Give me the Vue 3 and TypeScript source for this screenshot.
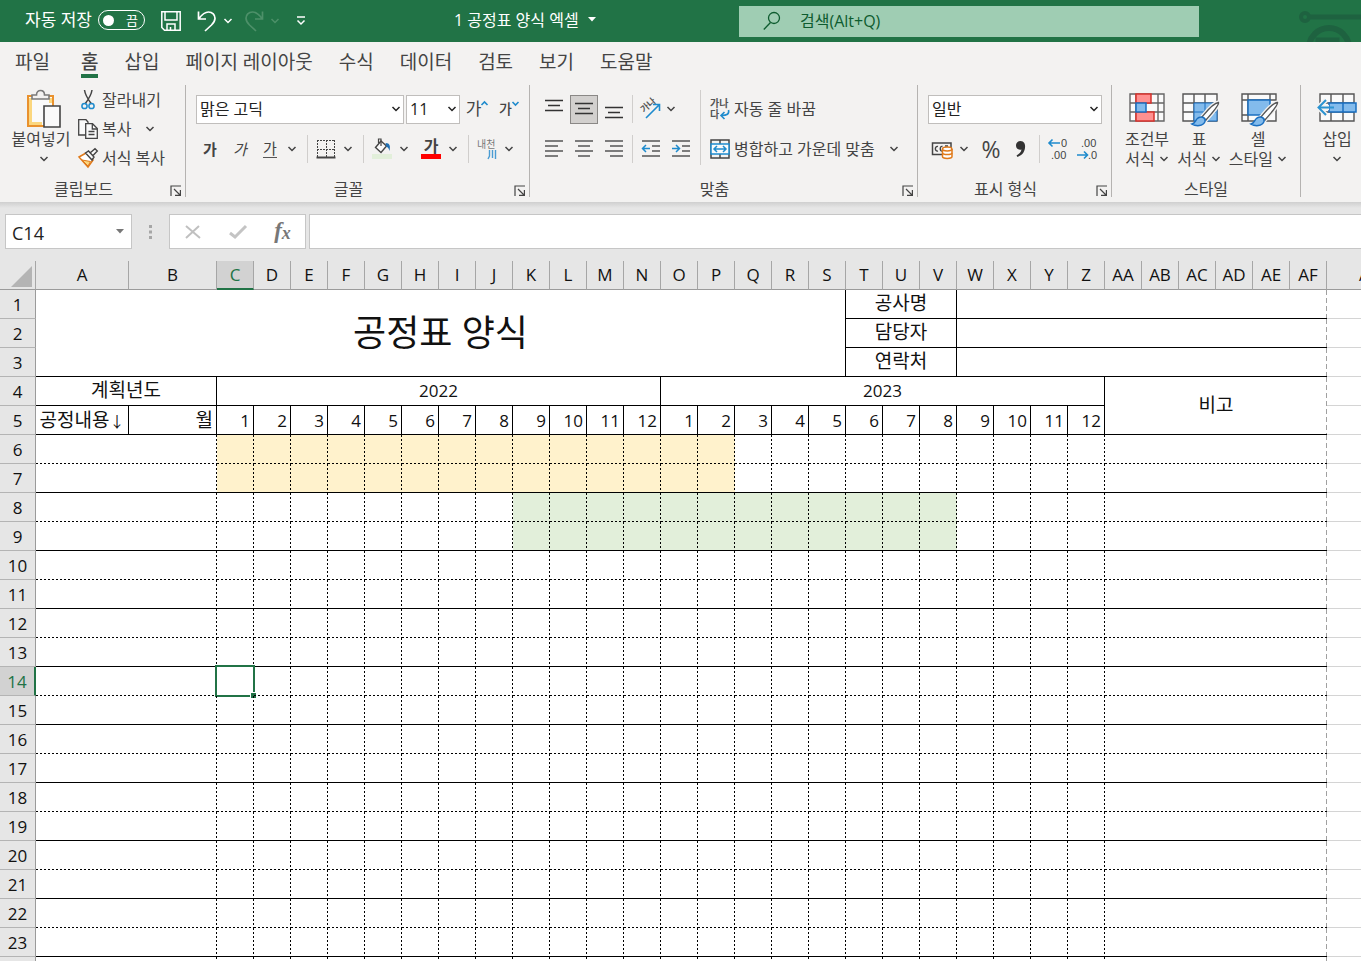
<script setup lang="ts">
import { h, ref } from 'vue'

const Chevron = () =>
  h('svg', { width: 10, height: 8, viewBox: '0 0 10 8', fill: 'none', stroke: 'currentColor', 'stroke-width': 1.5, 'aria-hidden': 'true' }, [
    h('path', { d: 'M1.5 2 5 5.5 8.5 2' }),
  ])

const Launcher = () =>
  h('svg', { width: 12, height: 12, viewBox: '0 0 12 12', fill: 'none', stroke: 'currentColor', 'stroke-width': 1.2, 'aria-hidden': 'true' }, [
    h('path', { d: 'M1 11V1H11M4 4l6 6M10.4 5V10.4H5' }),
  ])

const tabs = ['파일', '홈', '삽입', '페이지 레이아웃', '수식', '데이터', '검토', '보기', '도움말']
const activeTab = ref('홈')
const autoSave = ref(false)

const letters = 'ABCDEFGHIJKLMNOPQRSTUVWXYZ'.split('')
const columns = [...letters, ...['A', 'B', 'C', 'D', 'E', 'F', 'G'].map((l) => 'A' + l)]
const monthColumns = letters.slice(2)
const months = monthColumns.map((_, i) => (i % 12) + 1)
const bodyRows = Array.from({ length: 19 }, (_, i) => i + 6)

const selected = ref({ column: 'C', row: 14 })

interface Span { rows: number[]; from: number; to: number; tone: string }
const schedule: Span[] = [
  { rows: [6, 7], from: 0, to: 13, tone: 'cream' },
  { rows: [8, 9], from: 8, to: 19, tone: 'mint' },
]

function toneOf(row: number, index: number): string {
  return schedule.find((s) => s.rows.includes(row) && index >= s.from && index <= s.to)?.tone ?? ''
}
function isSelected(column: string, row: number): boolean {
  return selected.value.column === column && selected.value.row === row
}
function select(column: string, row: number) {
  selected.value = { column, row }
}
</script>

<template>
  <div class="app">
    <header class="titlebar">
      <span id="autosave" class="autosave">자동 저장</span>
      <button class="toggle" role="switch" :aria-checked="autoSave" aria-labelledby="autosave" @click="autoSave = !autoSave">
        <i class="knob"></i>{{ autoSave ? '켬' : '끔' }}
      </button>
      <button class="quick save" aria-label="저장">
        <svg width="20" height="20" viewBox="0 0 20 20" fill="none" stroke="currentColor" stroke-width="1.5">
          <path d="M.8.8H19.2V19.2H3.5L.8 16.5ZM4 1v8h12V1M6 19v-6h8v6M9.5 19v-3" />
        </svg>
      </button>
      <button class="quick undo" aria-label="실행 취소">
        <svg width="20" height="22" viewBox="0 0 20 22" fill="none" stroke="currentColor" stroke-width="1.7">
          <path d="M1.5 1.5V9H9M1.8 8.7C5 4.5 8 2 11.5 2C15.5 2 18 5 18 8.2C18 11 16.500 13 14.500 15L8 21" />
        </svg>
      </button>
      <button class="drop" aria-label="실행 취소 목록"><Chevron /></button>
      <button class="quick redo" aria-label="다시 실행" disabled>
        <svg width="20" height="22" viewBox="0 0 20 22" fill="none" stroke="currentColor" stroke-width="1.7">
          <path d="M18.500 1.500V9H11M18.200 8.700C15 4.500 12 2 8.500 2C4.500 2 2 5 2 8.200C2 11 3.500 13 5.500 15L12 21" />
        </svg>
      </button>
      <button class="drop redo" aria-label="다시 실행 목록" disabled><Chevron /></button>
      <button class="quick" aria-label="빠른 실행 도구 모음 사용자 지정">
        <svg width="10" height="10" viewBox="0 0 10 10" fill="none" stroke="currentColor" stroke-width="1.500"><path d="M1 1H9M1.500 4.500 5 8 8.500 4.500" /></svg>
      </button>
      <button class="docname">
        1 공정표 양식 엑셀
        <svg width="8" height="5" viewBox="0 0 8 5"><path d="M0 0H8L4 4.500Z" fill="currentColor" /></svg>
      </button>
      <label class="search">
        <svg width="18" height="20" viewBox="0 0 18 20" fill="none" stroke="currentColor" stroke-width="1.300"><circle cx="11" cy="7" r="5.500" /><path d="M7.500 11.500.8 18.500" /></svg>
        <input type="search" aria-label="검색" placeholder="검색(Alt+Q)" />
      </label>
      <svg class="circuit" width="62" height="42" viewBox="0 0 62 42" fill="none" stroke="#1e6240" aria-hidden="true">
        <circle cx="6" cy="17" r="4" stroke-width="4" /><path d="M11 17H62" stroke-width="5" />
        <circle cx="30" cy="48" r="20" stroke-width="6" /><path d="M18 39H39V42H18Z" fill="#1e6240" stroke-width="3" />
      </svg>
    </header>

    <nav class="tabs">
      <button v-for="t in tabs" :key="t" :class="['tab', { active: t === activeTab }]" @click="activeTab = t">{{ t }}</button>
    </nav>

    <div class="ribbon">
      <section class="group clipboard">
        <div class="body">
          <button class="big paste">
            <svg width="36" height="42" viewBox="0 0 36 42" fill="none">
              <path d="M2 7H27V37H2Z" fill="#fafafa" stroke="#e9912d" stroke-width="2" /><path d="M4.500 9V34.500H16M24.500 9V14" stroke="#fbd77f" stroke-width="3" />
              <path d="M6 10V6H10.500C10.500 0 18.500 0 18.500 6H23V10Z" fill="#f3f2f1" stroke="#7a7a7a" stroke-width="1.600" />
              <path d="M18 17H34V38H18Z" fill="#fafafa" stroke="#444" stroke-width="1.600" />
            </svg>
            <span>붙여넣기</span><Chevron />
          </button>
          <div class="stack">
            <button class="line">
              <svg width="20" height="20" viewBox="0 0 20 20" fill="none" stroke-width="1.500"><path d="M6.500 0C7 4 9 8 13.500 14M14 0C13.500 4 11.500 8 7 14" stroke="#444" /><circle cx="6.500" cy="16" r="2.600" stroke="#1e8bcd" /><circle cx="13.500" cy="16" r="2.600" stroke="#1e8bcd" /></svg>
              잘라내기
            </button>
            <button class="line">
              <svg width="20" height="20" viewBox="0 0 20 20" fill="#fafafa" stroke="#444" stroke-width="1.300"><path d="M.7.700H8L10 3V16H.7Z" /><path d="M7.700 4.700H14.500L19.300 9.500V19.300H7.700Z" /><path d="M14.300 5V10H19M10.500 12.500H16.500M10.500 15.500H16.500" fill="none" /></svg>
              복사 <Chevron class="after" />
            </button>
            <button class="line">
              <svg width="20" height="20" viewBox="0 0 20 20"><path d="M1 9 8 5 15 12 10 19Z" fill="#fff" stroke="#e07a1a" stroke-width="1.500" /><path d="M4 12 12.500 13.500 10 18Z" fill="#fbd77f" stroke="#e07a1a" /><path d="M7.500 5 10.500 3 16 9 14 12Z M12 5 17 .8 19.300 3 15 7.500" fill="#fafafa" stroke="#444" stroke-width="1.400" /></svg>
              서식 복사
            </button>
          </div>
        </div>
        <footer><span>클립보드</span><button aria-label="클립보드 옵션"><Launcher /></button></footer>
      </section>

      <section class="group font">
        <div class="body rows">
          <div class="row">
            <label class="combo family"><select aria-label="글꼴"><option>맑은 고딕</option></select><Chevron /></label>
            <label class="combo size"><select aria-label="글꼴 크기"><option>11</option></select><Chevron /></label>
            <button class="tool grow" aria-label="글꼴 크기 크게"><span>가</span><svg width="7" height="5" viewBox="0 0 7 5" fill="none" stroke="#1e8bcd" stroke-width="1.600"><path d="M.5 4 3.500 1 6.500 4" /></svg></button>
            <button class="tool shrink" aria-label="글꼴 크기 작게"><span>가</span><svg width="7" height="5" viewBox="0 0 7 5" fill="none" stroke="#1e8bcd" stroke-width="1.600"><path d="M.5 1 3.500 4 6.500 1" /></svg></button>
          </div>
          <div class="row">
            <button class="tool bold" aria-label="굵게">가</button>
            <button class="tool italic" aria-label="기울임꼴">가</button>
            <button class="tool under" aria-label="밑줄"><span>가</span></button>
            <button class="drop" aria-label="밑줄 종류"><Chevron /></button>
            <i class="sep"></i>
            <button class="tool" aria-label="테두리">
              <svg width="20" height="20" viewBox="0 0 20 20" fill="none" stroke="#444"><path d="M1 1.500H19M1 10.500H19M1.500 1V18M10.500 1V18M18.500 1V18" stroke-dasharray="2 1" /><path d="M.5 18.500H19.500" stroke-width="2" /></svg>
            </button>
            <button class="drop" aria-label="테두리 종류"><Chevron /></button>
            <i class="sep"></i>
            <button class="tool" aria-label="채우기 색">
              <svg width="20" height="20" viewBox="0 0 20 20" fill="none"><path d="M0 15H20V20H0Z" fill="#e2efda" /><path d="M9 2 3.500 8.500 9 13.500 14.500 7Z" fill="#fafafa" stroke="#444" stroke-width="1.400" /><path d="M9 7V0H6.500V4" stroke="#444" stroke-width="1.200" /><path d="M13.500 4C18 4 18.500 7 17.500 12C16.500 9 16 8 14.500 8Z" fill="#1e6fb3" /></svg>
            </button>
            <button class="drop" aria-label="채우기 색 선택"><Chevron /></button>
            <button class="tool color" aria-label="글꼴 색"><span>가</span></button>
            <button class="drop" aria-label="글꼴 색 선택"><Chevron /></button>
            <i class="sep"></i>
            <button class="tool" aria-label="윗주 필드 표시">
              <svg width="22" height="22" viewBox="0 0 22 22"><text x="1" y="10" font-size="10" fill="#777">내천</text><path d="M13.500 12V18L12 21M16.500 12V20M19.500 12V21" stroke="#4a9cd3" stroke-width="1.400" fill="none" /></svg>
            </button>
            <button class="drop" aria-label="윗주 옵션"><Chevron /></button>
          </div>
        </div>
        <footer><span>글꼴</span><button aria-label="글꼴 옵션"><Launcher /></button></footer>
      </section>

      <section class="group align">
        <div class="body">
          <div class="rows">
            <div class="row">
              <button class="tool" aria-label="위쪽 맞춤"><svg width="20" height="20" viewBox="0 0 20 20" stroke="#333" stroke-width="1.300"><path d="M1 1.500H19M4 6.500H16M1 11.500H19" /></svg></button>
              <button class="tool on" aria-label="가운데 맞춤" aria-pressed="true"><svg width="20" height="20" viewBox="0 0 20 20" stroke="#333" stroke-width="1.300"><path d="M1 4.500H19M4 9.500H16M1 14.500H19" /></svg></button>
              <button class="tool" aria-label="아래쪽 맞춤"><svg width="20" height="20" viewBox="0 0 20 20" stroke="#333" stroke-width="1.300"><path d="M1 8.500H19M4 13.500H16M1 18.500H19" /></svg></button>
              <i class="sep"></i>
              <button class="tool slim" aria-label="방향"><svg width="22" height="22" viewBox="0 0 22 22" fill="none"><text font-size="9" font-weight="700" fill="#555" transform="translate(5 15) rotate(-42)">가나</text><path d="M7 20 20 7M14 6.500H20.500V13" stroke="#1e8bcd" stroke-width="1.600" /></svg></button>
              <button class="drop" aria-label="방향 선택"><Chevron /></button>
            </div>
            <div class="row">
              <button class="tool" aria-label="왼쪽 맞춤"><svg width="20" height="20" viewBox="0 0 20 20" stroke="#555" stroke-width="1.500"><path d="M1 2H19M1 7H14M1 12H19M1 17H14" /></svg></button>
              <button class="tool" aria-label="가로 가운데 맞춤"><svg width="20" height="20" viewBox="0 0 20 20" stroke="#555" stroke-width="1.500"><path d="M1 2H19M4 7H16M1 12H19M4 17H16" /></svg></button>
              <button class="tool" aria-label="오른쪽 맞춤"><svg width="20" height="20" viewBox="0 0 20 20" stroke="#555" stroke-width="1.500"><path d="M1 2H19M6 7H19M1 12H19M6 17H19" /></svg></button>
              <i class="sep"></i>
              <button class="tool" aria-label="내어쓰기"><svg width="20" height="20" viewBox="0 0 20 20" fill="none" stroke="#555" stroke-width="1.500"><path d="M1 2H19M11 7H19M11 12H19M1 17H19" /><path d="M9 9.500H2M5 6 1.500 9.500 5 13" stroke="#1e8bcd" /></svg></button>
              <button class="tool" aria-label="들여쓰기"><svg width="20" height="20" viewBox="0 0 20 20" fill="none" stroke="#555" stroke-width="1.500"><path d="M1 2H19M11 7H19M11 12H19M1 17H19" /><path d="M1 9.500H8M5 6 8.500 9.500 5 13" stroke="#1e8bcd" /></svg></button>
            </div>
          </div>
          <i class="sep tall"></i>
          <div class="rows">
            <div class="row">
              <button class="line">
                <svg width="20" height="22" viewBox="0 0 20 22" fill="none"><text x="0" y="9" font-size="10" font-weight="700" fill="#555">가나</text><text x="0" y="20" font-size="10" font-weight="700" fill="#555">다</text><path d="M18.500 12C19.500 16 17 17.500 11.500 17.500M14.500 14 11 17.500 14.500 21" stroke="#1e8bcd" stroke-width="1.600" /></svg>
                자동 줄 바꿈
              </button>
            </div>
            <div class="row">
              <button class="line">
                <svg width="20" height="20" viewBox="0 0 20 20" fill="none"><path d="M1 1H19V19H1ZM10 1V5M10 15V19" stroke="#444" stroke-width="1.500" /><path d="M1 5H19V15H1Z" fill="#fafafa" stroke="#1e8bcd" stroke-width="1.500" /><path d="M4 10H16M7 7 4 10 7 13M13 7 16 10 13 13" stroke="#1e8bcd" stroke-width="1.500" /></svg>
                병합하고 가운데 맞춤 <Chevron class="after" />
              </button>
            </div>
          </div>
        </div>
        <footer><span>맞춤</span><button aria-label="맞춤 옵션"><Launcher /></button></footer>
      </section>

      <section class="group number">
        <div class="body rows">
          <div class="row">
            <label class="combo format"><select aria-label="표시 형식"><option>일반</option></select><Chevron /></label>
          </div>
          <div class="row">
            <button class="tool" aria-label="회계 표시 형식">
              <svg width="22" height="20" viewBox="0 0 22 20" fill="none"><path d="M1.500 4H20V15.500H1.500Z" stroke="#444" stroke-width="1.500" /><path d="M7 7.500C3.500 6.500 3.500 13 7 12M11.500 7.500C8.500 6.500 8.500 13 11.500 12M14 7H17" stroke="#444" stroke-width="1.400" /><path d="M11.500 10V17.500C11.500 20 21 20 21 17.500V10" fill="#fff" stroke="#e07a1a" stroke-width="1.500" /><path d="M11.500 14C12 16 20.500 16 21 14" stroke="#e07a1a" stroke-width="1.500" /><ellipse cx="16.200" cy="10" rx="4.700" ry="1.900" fill="#fff" stroke="#e07a1a" stroke-width="1.500" /></svg>
            </button>
            <button class="drop" aria-label="통화 선택"><Chevron /></button>
            <button class="tool percent" aria-label="백분율 스타일">%</button>
            <button class="tool" aria-label="쉼표 스타일"><svg width="12" height="18" viewBox="0 0 12 18"><path d="M5.500 1C9 1 10.500 4 10 8C9.500 12.500 6.500 15.500 2.500 17L1.500 15.500C4 14 6 12.500 6.500 9.500C3 10.500 1 8 1 5.500C1 3 3 1 5.500 1Z" fill="#333" /></svg></button>
            <i class="sep"></i>
            <button class="tool" aria-label="자릿수 늘림"><svg width="22" height="24" viewBox="0 0 22 24" fill="none"><text x="14" y="10" font-size="11" fill="#444">0</text><text x="4" y="22" font-size="11" fill="#444">.00</text><path d="M13 6H2M5.500 2.500 2 6 5.500 9.500" stroke="#1e8bcd" stroke-width="1.600" /></svg></button>
            <button class="tool" aria-label="자릿수 줄임"><svg width="22" height="24" viewBox="0 0 22 24" fill="none"><text x="4" y="10" font-size="11" fill="#444">.00</text><text x="11" y="22" font-size="11" fill="#444">.0</text><path d="M0 18H10M7 14.500 10.500 18 7 21.500" stroke="#1e8bcd" stroke-width="1.600" /></svg></button>
          </div>
        </div>
        <footer><span>표시 형식</span><button aria-label="표시 형식 옵션"><Launcher /></button></footer>
      </section>

      <section class="group styles">
        <div class="body">
          <button class="big">
            <svg width="36" height="34" viewBox="0 0 36 34" fill="none"><path d="M1 1H35V28H1ZM1 10H35M1 19H35M7 1V28M29 1V28" fill="#fafafa" stroke="#666" stroke-width="1.400" /><path d="M7 1H22V10H7ZM7 19H25V28H7Z" fill="#ff9090" stroke="#d8322c" stroke-width="1.500" /><path d="M7 10H17V19H7Z" fill="#83bbec" stroke="#1a6fc0" stroke-width="1.500" /></svg>
            <span>조건부</span><span>서식 <Chevron /></span>
          </button>
          <button class="big brush">
            <svg width="38" height="34" viewBox="0 0 38 34" fill="none"><path d="M1 1H35V28H1ZM1 10H35M1 19H12M12 1V28M23 1V10" fill="#fafafa" stroke="#555" stroke-width="1.400" /><path d="M12 10H35V28H12Z" fill="#83bbec" stroke="#1a6fc0" /><path d="M12 19H34M23 10V28" stroke="#1a6fc0" /><path d="M20 24C25 18 31 10 36 9.500C38 12 30 20 24 27Z" fill="#fff" stroke="#f3f2f1" stroke-width="4" /><path d="M20 24C25 18 31 10 36.500 9.500C37.500 12 30 20 24 27Z" fill="#fff" stroke="#555" stroke-width="1.400" /><path d="M10 31C14 30 13 27 16 25C20 22.500 24 25 23 28.500C21 33.500 14 33.500 10 31Z" fill="#83bbec" stroke="#1a6fc0" stroke-width="1.500" /></svg>
            <span>표</span><span>서식 <Chevron /></span>
          </button>
          <button class="big brush wide">
            <svg width="38" height="34" viewBox="0 0 38 34" fill="none"><path d="M1 1H35V28H1ZM1 7H35M7 1V28M29 1V7M1 22H7" fill="#fafafa" stroke="#555" stroke-width="1.400" /><path d="M7 7H29V22H7Z" fill="#83bbec" stroke="#1a6fc0" stroke-width="1.500" /><path d="M20 24C25 18 31 10 36 9.500C38 12 30 20 24 27Z" fill="#fff" stroke="#f3f2f1" stroke-width="4" /><path d="M20 24C25 18 31 10 36.500 9.500C37.500 12 30 20 24 27Z" fill="#fff" stroke="#555" stroke-width="1.400" /><path d="M10 31C14 30 13 27 16 25C20 22.500 24 25 23 28.500C21 33.500 14 33.500 10 31Z" fill="#83bbec" stroke="#1a6fc0" stroke-width="1.500" /></svg>
            <span>셀</span><span>스타일 <Chevron /></span>
          </button>
        </div>
        <footer><span>스타일</span></footer>
      </section>

      <section class="group cells">
        <div class="body">
          <button class="big">
            <svg width="40" height="34" viewBox="0 0 40 34" fill="none"><path d="M3 1H37V28H3ZM3 10H37M3 19H37M14 1V28M26 1V28" fill="#fafafa" stroke="#555" stroke-width="1.400" /><path d="M12 10H39V19H12Z" fill="#83bbec" stroke="#1a6fc0" stroke-width="1.500" /><path d="M26 10V19" stroke="#1a6fc0" stroke-width="1.500" /><path d="M12 14.500H3M9 7 1.500 14.500 9 22" stroke="#f3f2f1" stroke-width="5" /><path d="M17 14.500H2M9 7 1.500 14.500 9 22" stroke="#2b93d1" stroke-width="2" /></svg>
            <span>삽입</span><Chevron />
          </button>
        </div>
      </section>
    </div>

    <div class="formulabar">
      <div class="namebox">
        <input aria-label="이름 상자" :value="selected.column + selected.row" />
        <svg width="8" height="5" viewBox="0 0 8 5"><path d="M0 0H8L4 4.500Z" fill="#777" /></svg>
      </div>
      <svg class="grip" width="3" height="14" viewBox="0 0 3 14" fill="#a6a6a6"><path d="M0 0H3V3H0ZM0 5.500H3V8.500H0ZM0 11H3V14H0Z" /></svg>
      <div class="actions">
        <button aria-label="취소"><svg width="16" height="14" viewBox="0 0 16 14" fill="none" stroke="#c0c0c0" stroke-width="2"><path d="M1 1 15 13M14 1 1 13" /></svg></button>
        <button aria-label="입력"><svg width="18" height="14" viewBox="0 0 18 14" fill="none" stroke="#c4c4c4" stroke-width="3"><path d="M1 8 6 12 17 1" /></svg></button>
        <button class="fx" aria-label="함수 삽입">f<small>x</small></button>
      </div>
      <input class="formula" aria-label="수식 입력줄" />
    </div>

    <main class="sheet">
      <table>
        <colgroup>
          <col class="c-head" /><col class="c-a" /><col class="c-b" />
          <col v-for="n in 30" :key="n" class="c-month" />
          <col class="c-b" />
        </colgroup>
        <thead>
          <tr>
            <th class="corner"><svg width="21" height="21" viewBox="0 0 21 21" aria-hidden="true"><path d="M21 0V21H0Z" fill="#b4b4b4" /></svg></th>
            <th v-for="c in columns" :key="c" scope="col" :class="{ current: c === selected.column }">{{ c }}</th>
          </tr>
        </thead>
        <tbody>
          <tr>
            <th scope="row">1</th>
            <td colspan="19" rowspan="3" class="solid title">공정표 양식</td>
            <td colspan="3" class="solid label">공사명</td>
            <td colspan="8" class="solid-b"></td><td colspan="2" class="solid-b page"></td><td class="free"></td>
          </tr>
          <tr>
            <th scope="row">2</th>
            <td colspan="3" class="solid label">담당자</td>
            <td colspan="8" class="solid-b"></td><td colspan="2" class="solid-b page"></td><td class="free"></td>
          </tr>
          <tr>
            <th scope="row">3</th>
            <td colspan="3" class="solid label">연락처</td>
            <td colspan="8" class="solid-b"></td><td colspan="2" class="solid-b page"></td><td class="free"></td>
          </tr>
          <tr>
            <th scope="row">4</th>
            <td colspan="2" class="solid label">계획년도</td>
            <td colspan="12" class="solid">2022</td>
            <td colspan="12" class="solid">2023</td>
            <td colspan="6" rowspan="2" class="solid-b page label">비고</td><td class="free"></td>
          </tr>
          <tr>
            <th scope="row">5</th>
            <td class="solid item">공정내용<small>↓</small></td>
            <td class="solid item num">월</td>
            <td v-for="(m, i) in months" :key="i" class="solid num">{{ m }}</td>
            <td class="free"></td>
          </tr>
          <tr v-for="r in bodyRows" :key="r" :class="r % 2 ? 'lower' : 'upper'">
            <th scope="row" :class="{ current: r === selected.row }">{{ r }}</th>
            <td colspan="2" class="mark" @click="select('A', r)"></td>
            <td v-for="(c, i) in monthColumns" :key="c" :class="['mark', toneOf(r, i)]" @click="select(c, r)">
              <div v-if="isSelected(c, r)" class="cursor"></div>
            </td>
            <td colspan="6" class="mark page" @click="select('AA', r)"></td>
            <td class="free"></td>
          </tr>
        </tbody>
      </table>
    </main>
  </div>
</template>

<style>
html, body { margin: 0; background: #fff; }
</style>

<style scoped>
.app {
  height: 100vh;
  display: flex;
  flex-direction: column;
  overflow: hidden;
  font-family: "Open Sans", "Noto Sans CJK KR", sans-serif;
  font-size: 16px;
  line-height: 20px;
  color: #444;
}
button, input, select { font: inherit; color: inherit; margin: 0; padding: 0; border: 0; background: none; }
button { display: flex; align-items: center; justify-content: center; white-space: nowrap; }
svg { flex: none; overflow: visible; }
svg text { font-family: "Liberation Sans", "Noto Sans CJK KR", sans-serif; }

.titlebar { flex: none; height: 42px; display: flex; align-items: center; padding-left: 25px; background: #217346; color: #fff; font-size: 17px; overflow: hidden; }
.autosave { width: 73px; padding-bottom: 3px; white-space: nowrap; }
.toggle { box-sizing: border-box; width: 47px; height: 20px; margin: 0 12px 2px 0; padding: 0 6px 0 4px; justify-content: space-between; border: 1px solid #fff; border-radius: 10px; font-size: 13px; line-height: 16px; }
.knob { width: 11px; height: 11px; border-radius: 50%; background: #fff; }
.quick { width: 28px; height: 28px; }
.undo { margin-left: 8px; }
.redo { color: #4d9069; }
.drop { width: 14px; height: 28px; margin-right: 5px; }
.docname { gap: 9px; margin-left: 139px; padding-bottom: 3px; font-size: 16px; }
.search { box-sizing: border-box; flex: 0 1 460px; height: 31px; display: flex; align-items: center; gap: 19px; margin-left: auto; padding-left: 24px; background: #9fcdb3; color: #0e5c2f; font-size: 16px; }
.search input { flex: 1; min-width: 0; outline: 0; }
.search input::placeholder { color: #0e5c2f; opacity: 1; }
.circuit { margin-left: 100px; }

.tabs { flex: none; height: 40px; display: flex; gap: 26px; padding-left: 15px; background: #f3f2f1; font-size: 19px; }
.tab { box-sizing: border-box; height: 36px; padding-top: 8px; border-bottom: 4px solid transparent; }
.tab:first-child { margin-right: 5px; }
.tab.active { border-bottom-color: #217346; font-weight: 500; }

.ribbon { flex: none; height: 120px; display: flex; box-sizing: border-box; padding-top: 3px; background: #f3f2f1; overflow: hidden; }
.group { flex: none; box-sizing: border-box; height: 112px; display: flex; flex-direction: column; border-right: 1px solid #b5b3b1; }
.clipboard { width: 186px; }
.font { width: 344px; }
.align { width: 388px; }
.number { width: 194px; }
.styles { width: 189px; }
.cells { width: 74px; border-right: 0; }
.body { flex: 1; display: flex; min-height: 0; }
.group footer { flex: none; display: flex; height: 16px; align-items: center; }
.group footer span { flex: 1; text-align: center; line-height: 16px; }
.group footer button { width: 18px; height: 16px; padding-top: 4px; }
.rows { display: flex; flex-direction: column; padding-top: 4px; }
.row { flex: none; display: flex; align-items: center; height: 40px; }
.font .body, .number .body { padding-left: 9px; }
.align .body { padding-left: 9px; }

.tool { width: 30px; height: 29px; }
.tool.slim { width: 28px; }
.tool.on { box-sizing: border-box; width: 28px; margin: 0 1px; background: #d2d0ce; border: 1px solid #8a8886; }
.sep { width: 1px; height: 28px; margin: 0 3px; background: #d0cecc; }
.sep.tall { height: 75px; margin: 5px 9px 0 4px; }
.combo { display: grid; align-items: center; height: 29px; box-sizing: border-box; margin-left: 1px; border: 1px solid #c0bebc; background: #fff; color: #222; }
.combo > * { grid-area: 1 / 1; }
.combo svg { justify-self: end; margin-right: 2px; pointer-events: none; }
.combo select { appearance: none; width: 100%; height: 27px; padding-left: 3px; outline: 0; }
.family { width: 208px; }
.size { width: 54px; margin-left: 2px; }
.format { width: 174px; }
.grow, .shrink { margin-left: 2px; }
.grow { font-size: 17px; }
.shrink { font-size: 14px; font-weight: 500; }
.grow svg, .shrink svg { align-self: flex-start; margin-top: 6px; }
.bold { font-weight: 700; font-size: 15px; }
.italic { font-style: italic; font-size: 15px; }
.under { font-size: 15px; }
.under span { border-bottom: 1px solid #555; line-height: 17px; }
.color span { width: 20px; border-bottom: 5px solid #f00; font-weight: 700; line-height: 15px; }
.percent { font-size: 23px; }

.line { gap: 4px; height: 29px; justify-content: flex-start; }
.after { margin-left: 10px; }
.big { flex-direction: column; justify-content: flex-start; width: 52px; }
.big.wide { width: 66px; }
.big svg:first-child { margin-top: 8px; margin-bottom: 2px; }
.big span svg:first-child { margin: 0 0 2px; }
.big > svg:last-child { margin-top: 6px; }
.brush > svg:first-child { margin-left: 4px; }
.paste { width: 70px; margin: 0 2px 0 6px; }
.big.paste svg:first-child { margin-top: 4px; margin-bottom: -2px; }
.big.paste > svg { margin-left: 5px; }
.styles .body { padding-left: 9px; }
.cells .big { width: 72px; }

.formulabar { flex: none; height: 59px; box-sizing: border-box; display: flex; align-items: flex-start; padding: 12px 0 0 5px; background: linear-gradient(#cfcfcf, #e6e6e6 6px); color: #222; }
.namebox { box-sizing: border-box; width: 127px; height: 35px; display: flex; align-items: center; padding: 0 7px 0 6px; border: 1px solid #c6c6c6; background: #fff; font-size: 18px; }
.namebox input { flex: 1; min-width: 0; padding-top: 3px; outline: 0; }
.grip { margin: 11px 17px 0; }
.actions { box-sizing: border-box; width: 137px; height: 35px; display: flex; border: 1px solid #c6c6c6; background: #fff; }
.actions button { width: 45px; }
.actions .fx { font: italic 700 23px "Liberation Serif", serif; color: #777; padding-bottom: 2px; }
.fx small { font-size: 18px; padding-top: 5px; }
.formula { flex: 1; min-width: 0; box-sizing: border-box; height: 35px; margin-left: 3px; border: 1px solid #c6c6c6; border-right: 0; background: #fff; }

.sheet { flex: 1; min-height: 0; overflow: hidden; background: #fff; }
table { table-layout: fixed; width: 1415px; border-spacing: 0; color: #111; font-size: 17px; }
.c-head { width: 36px; }
.c-a { width: 93px; }
.c-b { width: 88px; }
.c-month { width: 37px; }
tr { height: 29px; }
th, td { box-sizing: border-box; height: 29px; padding: 0; text-align: center; line-height: 20px; white-space: nowrap; }
th { font-weight: 400; background: #e6e6e6; border-right: 1px solid #a6a6a6; border-bottom: 1px solid #b4b4b4; }
thead th { padding-bottom: 1px; border-bottom-color: #9b9b9b; }
tbody th { padding-top: 1px; border-right-color: #9b9b9b; }
th.current { background: #d2d2d2; color: #217346; }
thead th.current { padding-bottom: 0; border-bottom: 2px solid #217346; }
tbody th.current { border-right: 2px solid #217346; }
.corner svg { display: block; margin: 4px 3px 0 auto; }

.solid { border-right: 1px solid #000; border-bottom: 1px solid #000; }
.solid-b { border-bottom: 1px solid #000; }
.title { font-size: 36px; line-height: 40px; }
.label { font-size: 19px; padding-bottom: 2px; }
.item { font-size: 19px; }
.item small { font-size: 15px; }
.num { text-align: right; padding-right: 3px; }
td.num:not(.item) { padding-top: 1px; }
.free { border-bottom: 1px solid #d4d4d4; }

.mark {
  --across: repeating-linear-gradient(90deg, #000 0 2px, transparent 2px 4px);
  --down: repeating-linear-gradient(#000 0 2px, transparent 2px 4px);
  position: relative;
  background-image: var(--across), var(--down);
  background-size: 100% 1px, 1px 100%;
  background-position: left bottom, right top;
  background-repeat: no-repeat;
}
.lower .mark { --across: linear-gradient(#000, #000); }
.page {
  --down: repeating-linear-gradient(#a0a0a0 0 5px, transparent 5px 8px);
  background-image: var(--down);
  background-size: 1px 100%;
  background-position: right top;
  background-repeat: no-repeat;
}
.mark.page {
  --down: repeating-linear-gradient(#a0a0a0 0 5px, transparent 5px 8px);
  background-image: var(--across), var(--down);
  background-size: 100% 1px, 1px 100%;
  background-position: left bottom, right top;
}
.cream { background-color: #fff2cc; }
.mint { background-color: #e2efda; }
.cursor { position: absolute; inset: -2px -1px -1px -2px; border: 2px solid #217346; }
.cursor::after { content: ""; position: absolute; right: -3px; bottom: -3px; width: 5px; height: 5px; background: #217346; border: 1px solid #fff; border-right: 0; border-bottom: 0; }
</style>
